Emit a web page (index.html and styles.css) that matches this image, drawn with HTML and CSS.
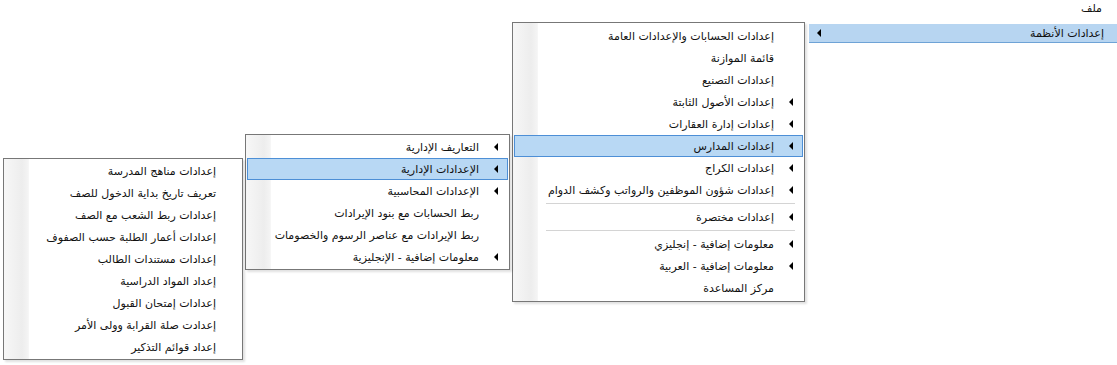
FILE: index.html
```html
<!DOCTYPE html>
<html lang="ar" dir="rtl">
<head>
<meta charset="utf-8">
<title>ملف</title>
<link rel="stylesheet" href="styles.css">
</head>
<body>
<div class="screen">
  <div class="menubar"><span class="menubar-item">ملف</span></div>

  <div class="top-drop">
    <div class="top-row"><span class="top-text">إعدادات الأنظمة</span><span class="arrow top-arrow"></span></div>
  </div>

  <div class="menu menu-main">
    <div class="strip"></div>
    <div class="item"><span class="arr-slot"></span><span class="label">إعدادات الحسابات والإعدادات العامة</span></div>
    <div class="item"><span class="arr-slot"></span><span class="label">قائمة الموازنة</span></div>
    <div class="item"><span class="arr-slot"></span><span class="label">إعدادات التصنيع</span></div>
    <div class="item"><span class="arr-slot"><span class="arrow"></span></span><span class="label">إعدادات الأصول الثابتة</span></div>
    <div class="item"><span class="arr-slot"><span class="arrow"></span></span><span class="label">إعدادات إدارة العقارات</span></div>
    <div class="item active"><span class="arr-slot"><span class="arrow"></span></span><span class="label">إعدادات المدارس</span></div>
    <div class="item"><span class="arr-slot"><span class="arrow"></span></span><span class="label">إعدادات الكراج</span></div>
    <div class="item"><span class="arr-slot"><span class="arrow"></span></span><span class="label">إعدادات شؤون الموظفين والرواتب وكشف الدوام</span></div>
    <div class="sep"></div>
    <div class="item"><span class="arr-slot"><span class="arrow"></span></span><span class="label">إعدادات مختصرة</span></div>
    <div class="sep"></div>
    <div class="item"><span class="arr-slot"><span class="arrow"></span></span><span class="label">معلومات إضافية - إنجليزي</span></div>
    <div class="item"><span class="arr-slot"><span class="arrow"></span></span><span class="label">معلومات إضافية - العربية</span></div>
    <div class="item"><span class="arr-slot"></span><span class="label">مركز المساعدة</span></div>
  </div>

  <div class="menu menu-sub">
    <div class="strip"></div>
    <div class="item"><span class="arr-slot"><span class="arrow"></span></span><span class="label">التعاريف الإدارية</span></div>
    <div class="item active"><span class="arr-slot"><span class="arrow"></span></span><span class="label">الإعدادات الإدارية</span></div>
    <div class="item"><span class="arr-slot"><span class="arrow"></span></span><span class="label">الإعدادات المحاسبية</span></div>
    <div class="item"><span class="arr-slot"></span><span class="label">ربط الحسابات مع بنود الإيرادات</span></div>
    <div class="item"><span class="arr-slot"></span><span class="label">ربط الإيرادات مع عناصر الرسوم والخصومات</span></div>
    <div class="item"><span class="arr-slot"><span class="arrow"></span></span><span class="label">معلومات إضافية - الإنجليزية</span></div>
  </div>

  <div class="menu menu-leaf">
    <div class="strip"></div>
    <div class="item plain"><span class="label">إعدادات مناهج المدرسة</span></div>
    <div class="item plain"><span class="label">تعريف تاريخ بداية الدخول للصف</span></div>
    <div class="item plain"><span class="label">إعدادات ربط الشعب مع الصف</span></div>
    <div class="item plain"><span class="label">إعدادات أعمار الطلبة حسب الصفوف</span></div>
    <div class="item plain"><span class="label">إعدادات مستندات الطالب</span></div>
    <div class="item plain"><span class="label">إعداد المواد الدراسية</span></div>
    <div class="item plain"><span class="label">إعدادات إمتحان القبول</span></div>
    <div class="item plain"><span class="label">إعدادت صلة القرابة وولى الأمر</span></div>
    <div class="item plain"><span class="label">إعداد قوائم التذكير</span></div>
  </div>
</div>
</body>
</html>
```

FILE: styles.css
```css
html, body {
  margin: 0;
  padding: 0;
  background: #ffffff;
}
.screen {
  position: relative;
  width: 1117px;
  height: 365px;
  overflow: hidden;
  font-family: "DejaVu Sans", sans-serif;
  font-size: 11px;
  color: #111;
  direction: rtl;
}
.menubar {
  height: 20px;
  display: flex;
  align-items: center;
  padding-right: 15px;
}
.menubar-item {
  line-height: 16px;
  margin-top: -3px;
}
.top-drop {
  position: absolute;
  left: 809px;
  right: -10px;
  top: 24px;
}
.top-row {
  height: 18px;
  background: #b7d5f1;
  border-bottom: 1px solid #6ea3d6;
  display: flex;
  align-items: center;
  padding-right: 23px;
  padding-left: 8px;
}
.top-text {
  flex: 1;
}
.top-arrow {
  margin-left: 0;
}
.menu {
  position: absolute;
  background: #ffffff;
  border: 1px solid #777777;
  box-shadow: 2px 2px 2px rgba(0, 0, 0, 0.12);
  display: flex;
  flex-direction: column;
}
.strip {
  position: absolute;
  left: 0;
  top: 0;
  bottom: 0;
  width: 24px;
  background: linear-gradient(to right, #f7f7f7, #ededed 75%, #f4f4f4);
  border-right: 1px solid #f6f6f6;
}
.menu-main {
  left: 512px;
  top: 22px;
  width: 291px;
  padding: 2px 0;
}
.menu-sub {
  left: 245px;
  top: 134px;
  width: 263px;
  padding: 1px 0;
}
.menu-leaf {
  left: 3px;
  top: 158px;
  width: 238px;
  padding: 1px 0;
}
.item {
  position: relative;
  height: 22px;
  display: flex;
  align-items: center;
  margin: 0 1px;
  border: 1px solid transparent;
  box-sizing: border-box;
}
.item.active {
  background: #b8d8f4;
  border-color: #4d8fd6;
}
.arr-slot {
  width: 22px;
  display: flex;
  justify-content: center;
  flex-shrink: 0;
}
.label {
  margin-right: 6px;
  white-space: nowrap;
}
.item.plain .label {
  margin-right: 24px;
}
.arrow {
  display: inline-block;
  width: 0;
  height: 0;
  border-top: 4px solid transparent;
  border-bottom: 4px solid transparent;
  border-right: 4px solid #000;
}
.sep {
  height: 5px;
  display: flex;
  align-items: center;
  position: relative;
}
.sep::after {
  content: "";
  display: block;
  height: 1px;
  background: #d4d4d4;
  margin-left: 33px;
  margin-right: 9px;
  flex: 1;
}
```
